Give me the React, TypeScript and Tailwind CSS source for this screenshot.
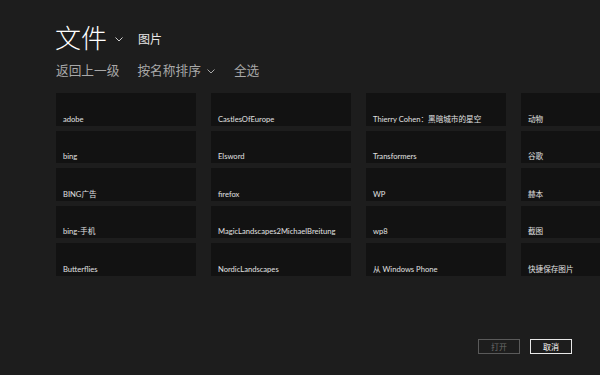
const folders = [
  "adobe", "bing", "BING广告", "bing-手机", "Butterflies",
  "CastlesOfEurope", "Elsword", "firefox", "MagicLandscapes2MichaelBreitung", "NordicLandscapes",
  "Thierry Cohen：黑暗城市的星空", "Transformers", "WP", "wp8", "从 Windows Phone",
  "动物", "谷歌", "赫本", "截图", "快捷保存图片",
]

function Chevron({ className }: { className?: string }) {
  return (
    <svg width="8" height="5" viewBox="0 0 8 5" className={className} fill="none">
      <path d="M0.5 0.5 L4 4 L7.5 0.5" stroke="currentColor" strokeWidth="1" />
    </svg>
  )
}

export default function App() {
  return (
    <div
      className="w-[600px] h-[375px] bg-[#1d1d1d] overflow-hidden flex flex-col text-white"
      style={{ fontFamily: '"Open Sans", "Noto Sans CJK SC", sans-serif' }}
    >
      {/* header */}
      <div className="pl-[55px] pt-[21px] flex items-end">
        <span className="text-[26px] leading-[34px] font-light">文件</span>
        <Chevron className="ml-[8px] mb-[13px] text-[#cfcfcf]" />
        <span className="ml-[15px] mb-[6px] text-[12px] text-[#e6e6e6]">图片</span>
      </div>
      <div className="pl-[56px] mt-[6px] flex items-center text-[12.7px] text-[#a8a8a8]">
        <span>返回上一级</span>
        <span className="ml-[18px]">按名称排序</span>
        <Chevron className="ml-[6px] mt-[2px]" />
        <span className="ml-[19px]">全选</span>
      </div>

      {/* folder grid */}
      <div className="mt-[13px] pl-[56px] grid grid-flow-col grid-rows-5 auto-cols-[140px] gap-x-[15px] gap-y-[5px]">
        {folders.map((name) => (
          <div key={name} className="h-[32.5px] bg-[#121212] flex items-end px-[7px] pb-[2px]">
            <span
              className="text-[7.6px] leading-[10px] text-[#e0e0e0] whitespace-nowrap"
              style={{ fontFamily: 'Lato, "Noto Sans CJK SC", sans-serif' }}
            >
              {name}
            </span>
          </div>
        ))}
      </div>

      {/* actions */}
      <div className="mt-auto mb-[21px] pr-[28px] flex justify-end gap-[10px]">
        <button className="w-[42px] h-[15px] border border-[#5a5a5a] text-[8px] leading-none text-[#6a6a6a]">打开</button>
        <button className="w-[42px] h-[15px] border border-[#e8e8e8] text-[8px] leading-none text-white">取消</button>
      </div>
    </div>
  )
}
